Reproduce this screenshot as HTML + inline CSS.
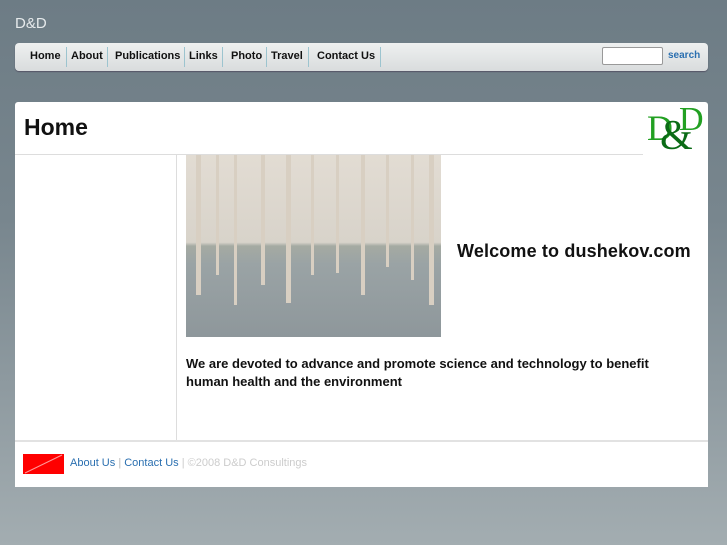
<!DOCTYPE html>
<html><head><style>
body{margin:0;width:727px;height:545px;overflow:hidden;background:linear-gradient(#6d7c85 0%,#78868e 40%,#a3adb1 100%);font-family:"Liberation Sans",sans-serif;position:relative}
.t{position:absolute;left:15px;top:15px;color:#e6eaec;font-size:15px}
.nav{position:absolute;left:15px;top:43px;width:693px;height:28px;background:linear-gradient(#eef0f0,#d9dcdd);border-radius:4px;box-shadow:0 1px 1px #556}
.nav span{position:absolute;top:7px;font-size:11px;font-weight:bold;color:#111}
.sep{position:absolute;top:4px;width:1px;height:20px;background:#9cc4cf}
.inp{position:absolute;left:587px;top:4px;width:59px;height:16px;background:#fff;border:1px solid #999;border-radius:2px}
.main{position:absolute;left:15px;top:102px;width:693px;height:385px;background:#fff;border-radius:3px 3px 0 0}
h1{position:absolute;left:9px;top:12px;margin:0;font-size:23px;color:#111}
.photo{position:absolute;left:171px;top:53px;width:255px;height:182px;background:linear-gradient(#e2dcd3 0%,#d8d3ca 48%,#a5aaa2 50%,#9aa3a5 60%,#8e979b 100%);overflow:hidden}
.photo i{position:absolute;top:0;width:5px;background:#d8cfc2}
.lg{position:absolute;font-family:'Liberation Serif',serif;color:#22a022}
</style></head><body>
<div class="t">D&amp;D</div>
<div class="nav">
<span style="left:15px">Home</span><div class="sep" style="left:51px"></div>
<span style="left:56px">About</span><div class="sep" style="left:92px"></div>
<span style="left:100px">Publications</span><div class="sep" style="left:169px"></div>
<span style="left:174px">Links</span><div class="sep" style="left:207px"></div>
<span style="left:216px">Photo</span><div class="sep" style="left:251px"></div>
<span style="left:256px">Travel</span><div class="sep" style="left:293px"></div>
<span style="left:302px">Contact Us</span><div class="sep" style="left:365px"></div>
<div class="inp"></div>
<span style="left:653px;color:#2a6fb0;font-size:10px;top:7px">search</span>
</div>
<div class="main">
<h1>Home</h1>
<div class="lg" style="left:632px;top:5px;font-size:36px">D</div>
<div class="lg" style="left:645px;top:10px;font-size:42px;color:#0b6b16">&amp;</div>
<div class="lg" style="left:664px;top:-1px;font-size:34px">D</div>
<div style="position:absolute;left:0;top:52px;width:628px;height:1px;background:#ddd"></div>
<div style="position:absolute;left:161px;top:53px;width:1px;height:285px;background:#ddd"></div>
<div class="photo">
<i style="left:10px;height:140px"></i><i style="left:30px;height:120px;width:3px"></i><i style="left:48px;height:150px;width:3px"></i><i style="left:75px;height:130px;width:4px"></i><i style="left:100px;height:148px"></i><i style="left:125px;height:120px;width:3px"></i><i style="left:150px;height:118px;width:3px"></i><i style="left:175px;height:140px;width:4px"></i><i style="left:200px;height:112px;width:3px"></i><i style="left:225px;height:125px;width:3px"></i><i style="left:243px;height:150px;width:5px"></i>
</div>
<div style="position:absolute;left:442px;top:139px;font-size:18px;font-weight:bold;color:#111;letter-spacing:0.15px">Welcome to dushekov.com</div>
<div style="position:absolute;left:171px;top:253px;width:500px;font-size:13px;font-weight:bold;line-height:18px;color:#111">We are devoted to advance and promote science and technology to benefit human health and the environment</div>
<div style="position:absolute;left:0;top:338px;width:693px;height:2px;background:#e2e2e2"></div>
<svg style="position:absolute;left:8px;top:352px" width="41" height="20"><rect width="41" height="20" fill="#f00"/><line x1="2" y1="19" x2="39" y2="1" stroke="#f99" stroke-width="1"/></svg>
<div style="position:absolute;left:55px;top:355px;font-size:11px;color:#2a6fb0">About Us <span style="color:#bbb">|</span> Contact Us <span style="color:#ccc">| ©2008 D&amp;D Consultings</span></div>
</div>
</body></html>
